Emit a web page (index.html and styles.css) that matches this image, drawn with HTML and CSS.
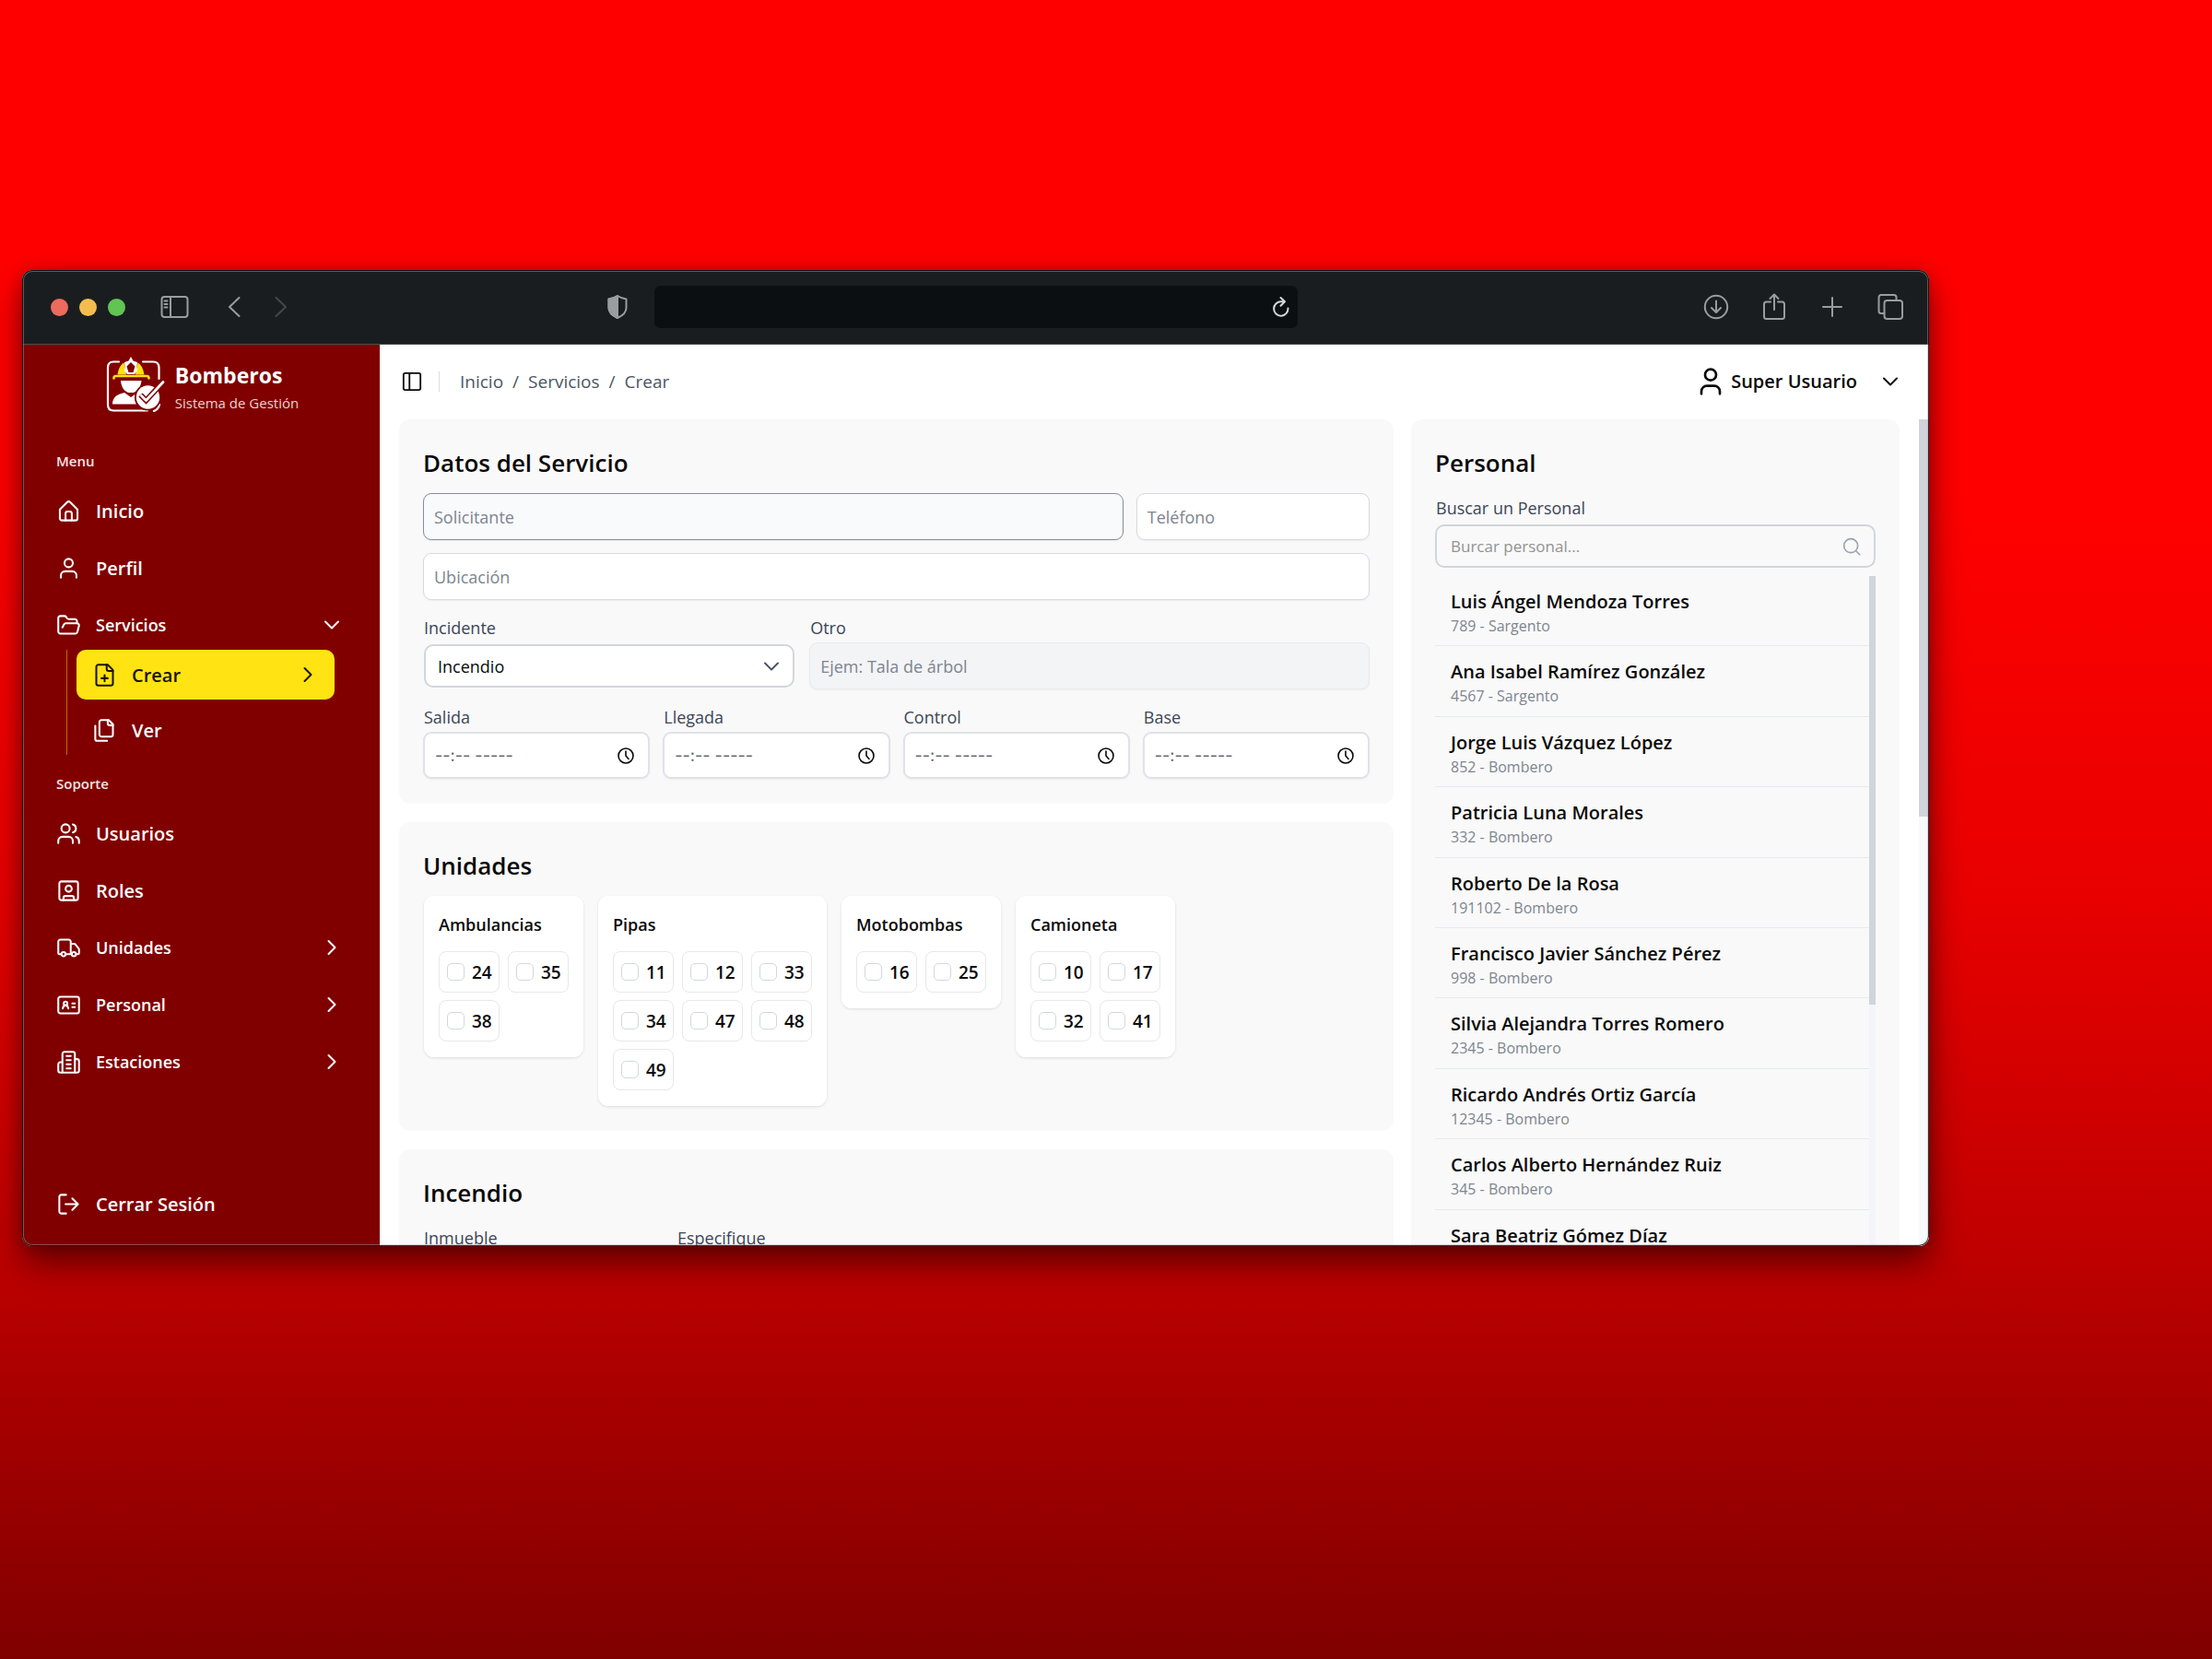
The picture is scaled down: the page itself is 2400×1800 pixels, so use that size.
FILE: index.html
```html
<!DOCTYPE html>
<html lang="es">
<head>
<meta charset="utf-8">
<meta name="viewport" content="width=device-width, initial-scale=1">
<title>Bomberos - Crear servicio</title>
<link rel="stylesheet" href="styles.css">
</head>
<body>
<div class="stage">
<div class="window">
  <div class="toolbar">
    <div class="toolbar-side">
      <span class="lights"><i class="light light-close"></i><i class="light light-min"></i><i class="light light-max"></i></span>
      <button class="tool tool-panel" type="button" aria-label="Barra lateral"><svg width="32" height="26" viewBox="0 0 32 26"><rect x="1.500" y="2" width="28" height="22" rx="3"/><path d="M11 2v22M4.500 6.500h3M4.500 10h3M4.500 13.500h3"/></svg></button>
      <button class="tool tool-back" type="button" aria-label="Atrás"><svg width="16" height="26" viewBox="0 0 16 26"><path d="M13.500 3 3 13l10.500 10"/></svg></button>
      <button class="tool tool-next" type="button" aria-label="Adelante"><svg width="16" height="26" viewBox="0 0 16 26"><path d="M2.500 3 13 13 2.500 23"/></svg></button>
      <button class="tool tool-shield" type="button" aria-label="Privacidad"><svg width="24" height="28" viewBox="0 0 24 28"><path d="M12 2c3 2 6 3 9.500 3.500V15c0 5-4 8.500-9.500 11C6.500 23.500 2.500 20 2.500 15V5.500C6 5 9 4 12 2z"/><path class="solid" d="M12 2v24C6.500 23.500 2.500 20 2.500 15V5.500C6 5 9 4 12 2z"/></svg></button>
    </div>
    <div class="address">
      <button class="tool reload" type="button" aria-label="Recargar"><svg width="20" height="24" viewBox="0 0 20 24"><path d="M17.500 13.500A7.700 7.700 0 1 1 10 6.300h3.500M9.500 2l4.500 4.300-4.500 4.500"/></svg></button>
    </div>
    <div class="toolbar-side toolbar-end">
      <button class="tool" type="button" aria-label="Descargas"><svg width="28" height="30" viewBox="0 0 28 30"><circle cx="14" cy="15" r="12.200"/><path d="M14 8.500v12M9 16l5 5 5-5"/></svg></button>
      <button class="tool" type="button" aria-label="Compartir"><svg width="28" height="30" viewBox="0 0 28 30"><path d="M10 9.500H5.500A2.500 2.500 0 0 0 3 12v13.500A2.500 2.500 0 0 0 5.500 28h17a2.500 2.500 0 0 0 2.500-2.500V12a2.500 2.500 0 0 0-2.500-2.500H18M14 18V1.500M9.500 6 14 1.500 18.500 6"/></svg></button>
      <button class="tool" type="button" aria-label="Nueva pestaña"><svg width="28" height="30" viewBox="0 0 28 30"><path d="M14 5v20M4 15h20"/></svg></button>
      <button class="tool" type="button" aria-label="Pestañas"><svg width="28" height="30" viewBox="0 0 28 30"><rect x="7.500" y="8" width="19.500" height="20" rx="3"/><path d="M7.500 22H4a2.500 2.500 0 0 1-2.500-2.500v-15A2.500 2.500 0 0 1 4 2h14a2.500 2.500 0 0 1 2.500 2.500V8"/></svg></button>
    </div>
  </div>

  <div class="app">
    <aside class="sidebar">
      <div class="brand">
        <svg class="logo" width="64" height="60" viewBox="0 0 64 60">
          <g fill="none" stroke="#fff" stroke-width="2.200" stroke-linecap="round">
            <path d="M14 5.500H8Q2 5.500 2 12v40q0 6.500 6 6.500h37"/>
            <path d="M40 5.500h11q6.500 0 6.500 6.500v12"/>
            <path d="M52 59q5-2 6-7"/>
          </g>
          <path fill="#fee20e" d="M12.500 19.500C13.500 13 16 8.500 19.500 6.500l2.500 13zM41.500 19.500C40.500 13 38 8.500 34.500 6.500l-2.500 13z"/>
          <path fill="none" stroke="#fee20e" stroke-width="2.600" stroke-linecap="round" stroke-linejoin="round" d="M8.500 23.500q0-2.500 2-2.500h34q2 0 2 2.500"/>
          <path fill="#fff" d="M27 0l2.500 4.500 4.500 1.500-.5 5 .5 4.500-3 3.500h-8l-3-3.500.5-4.500-.5-5 4.500-1.500z"/>
          <path fill="#800000" d="M27 6l4.500 4.500L29.500 17h-5l-2-6.500z"/>
          <path fill="#fff" d="M16 26h22.500c-.5 7-5 12-9 13h-5c-4-1-8-5.500-8.500-13z"/>
          <path fill="#fff" d="M7 51.500c0-8 6-11 13-12.500l7 5 5-3.500c-1 4-1 8 1 11z"/>
          <circle cx="45.500" cy="44" r="14.500" fill="#800000"/>
          <circle cx="45.500" cy="44" r="12.700" fill="#fff"/>
          <path fill="none" stroke="#800000" stroke-width="6" stroke-linecap="butt" stroke-linejoin="miter" d="M37.500 41.500l6 6L61 28.500"/>
          <path fill="none" stroke="#fff" stroke-width="2.800" stroke-linecap="round" d="M38.500 42.500l5 5L62 27.500"/>
        </svg>
        <div class="brand-text"><strong class="brand-name">Bomberos</strong><span class="brand-sub">Sistema de Gestión</span></div>
      </div>

      <nav class="nav">
        <h2 class="nav-label">Menu</h2>
        <a class="nav-item" href="#"><svg class="icon" viewBox="0 0 24 24"><path d="M3.500 10.500 10.400 3.600a2.300 2.300 0 0 1 3.200 0l6.900 6.900V19a2 2 0 0 1-2 2h-13a2 2 0 0 1-2-2z"/><path d="M9 21v-6.500a2 2 0 0 1 2-2h2a2 2 0 0 1 2 2V21"/></svg>Inicio</a>
        <a class="nav-item" href="#"><svg class="icon" viewBox="0 0 24 24"><path d="M19.500 21v-2a4 4 0 0 0-4-4h-7a4 4 0 0 0-4 4v2"/><circle cx="12" cy="7" r="4"/></svg>Perfil</a>
        <button class="nav-item nav-group" type="button"><svg class="icon" viewBox="0 0 24 24"><path d="m6 14 1.500-2.900A2 2 0 0 1 9.240 10H20a2 2 0 0 1 1.940 2.500l-1.540 6a2 2 0 0 1-1.950 1.500H4a2 2 0 0 1-2-2V5a2 2 0 0 1 2-2h3.900a2 2 0 0 1 1.690.9l.81 1.200a2 2 0 0 0 1.670.9H18a2 2 0 0 1 2 2v2"/></svg>Servicios<svg class="chevron" viewBox="0 0 24 24"><path d="m5 8.500 7 7 7-7"/></svg></button>
        <div class="subnav">
          <a class="subnav-item active" href="#"><svg class="icon" viewBox="0 0 24 24"><path d="M15 2H6a2 2 0 0 0-2 2v16a2 2 0 0 0 2 2h12a2 2 0 0 0 2-2V7z"/><path d="M14 2v4a2 2 0 0 0 2 2h4M9 15h6M12 12v6"/></svg>Crear<svg class="chevron" viewBox="0 0 24 24"><path d="m8.500 5 7 7-7 7"/></svg></a>
          <a class="subnav-item" href="#"><svg class="icon" viewBox="0 0 24 24"><path d="M20 7h-3a2 2 0 0 1-2-2V2"/><path d="M9 18a2 2 0 0 1-2-2V4a2 2 0 0 1 2-2h7l4 4v10a2 2 0 0 1-2 2z"/><path d="M3 7.600v12.800A1.600 1.600 0 0 0 4.600 22h9.800"/></svg>Ver</a>
        </div>
        <h2 class="nav-label nav-label-next">Soporte</h2>
        <a class="nav-item" href="#"><svg class="icon" viewBox="0 0 24 24"><path d="M16 21v-2a4 4 0 0 0-4-4H6a4 4 0 0 0-4 4v2"/><circle cx="9" cy="7" r="4"/><path d="M22 21v-2a4 4 0 0 0-3-3.870M16 3.130a4 4 0 0 1 0 7.750"/></svg>Usuarios</a>
        <a class="nav-item" href="#"><svg class="icon" viewBox="0 0 24 24"><rect x="3" y="3" width="18" height="18" rx="2"/><circle cx="12" cy="10" r="3"/><path d="M7 21v-2a2 2 0 0 1 2-2h6a2 2 0 0 1 2 2v2"/></svg>Roles</a>
        <button class="nav-item nav-group" type="button"><svg class="icon" viewBox="0 0 24 24"><path d="M14 18V6a2 2 0 0 0-2-2H4a2 2 0 0 0-2 2v11a1 1 0 0 0 1 1h2M15 18H9M19 18h2a1 1 0 0 0 1-1v-3.650a1 1 0 0 0-.22-.62l-3.480-4.350A1 1 0 0 0 17.520 8H14"/><circle cx="7" cy="18" r="2"/><circle cx="17" cy="18" r="2"/></svg>Unidades<svg class="chevron" viewBox="0 0 24 24"><path d="m8.500 5 7 7-7 7"/></svg></button>
        <button class="nav-item nav-group" type="button"><svg class="icon" viewBox="0 0 24 24"><rect x="2" y="4" width="20" height="16" rx="2"/><circle cx="9" cy="10.500" r="1.800"/><path d="M6.300 15.300c.3-1.900 1.300-3 2.700-3s2.400 1.100 2.700 3M15.500 10.500h2.500M15.500 14h2.500"/></svg>Personal<svg class="chevron" viewBox="0 0 24 24"><path d="m8.500 5 7 7-7 7"/></svg></button>
        <button class="nav-item nav-group" type="button"><svg class="icon" viewBox="0 0 24 24"><path d="M6 22V4a2 2 0 0 1 2-2h8a2 2 0 0 1 2 2v18zM6 12H4a2 2 0 0 0-2 2v6a2 2 0 0 0 2 2h2M18 9h2a2 2 0 0 1 2 2v9a2 2 0 0 1-2 2h-2M10 6h4M10 10h4M10 14h4M10 18h4"/></svg>Estaciones<svg class="chevron" viewBox="0 0 24 24"><path d="m8.500 5 7 7-7 7"/></svg></button>
      </nav>
      <button class="nav-item logout" type="button"><svg class="icon" viewBox="0 0 24 24"><path d="M9.500 21H5a2 2 0 0 1-2-2V5a2 2 0 0 1 2-2h4.500M9 12h12M15.500 6.500 21 12l-5.500 5.500"/></svg>Cerrar Sesión</button>
    </aside>

    <main class="main">
      <header class="header">
        <button class="plain" type="button" aria-label="Contraer menú"><svg class="icon-panel" viewBox="0 0 24 24"><rect x="2" y="2" width="20" height="20" rx="2"/><path d="M9 2v20"/></svg></button>
        <span class="divider"></span>
        <nav class="crumbs"><a href="#">Inicio</a><span>/</span><a href="#">Servicios</a><span>/</span><a href="#">Crear</a></nav>
        <button class="plain account" type="button"><svg class="icon-user" viewBox="0 0 24 24"><path d="M19.500 22v-2a4.500 4.500 0 0 0-4.500-4.500H9A4.500 4.500 0 0 0 4.500 20v2"/><circle cx="12" cy="6.500" r="4.500"/></svg>Super Usuario<svg class="icon-down" viewBox="0 0 24 24"><path d="m5 8.500 7 7 7-7"/></svg></button>
      </header>

      <div class="scroll-area">
        <div class="content">
          <div class="column">
            <section class="card">
              <h1 class="title">Datos del Servicio</h1>
              <div class="fields">
                <div class="row row-wide">
                  <input class="input input-hover" type="text" placeholder="Solicitante" aria-label="Solicitante">
                  <input class="input" type="tel" placeholder="Teléfono" aria-label="Teléfono">
                </div>
                <input class="input" type="text" placeholder="Ubicación" aria-label="Ubicación">
                <div class="row row-incident">
                  <div class="field"><label class="label" for="incidente">Incidente</label>
                    <div class="select-wrap"><select class="select" id="incidente"><option>Incendio</option></select><svg class="select-arrow" viewBox="0 0 24 24"><path d="m5 8.500 7 7 7-7"/></svg></div>
                  </div>
                  <div class="field"><label class="label" for="otro">Otro</label><input class="input" id="otro" type="text" placeholder="Ejem: Tala de árbol" disabled></div>
                </div>
                <div class="row row-times">
                  <div class="field"><label class="label" for="salida">Salida</label><div class="time"><input class="input input-time" id="salida" type="text" placeholder="--:-- -----"><svg class="clock" viewBox="0 0 20 20"><circle cx="10" cy="10" r="8"/><path d="M10 5v5l3 3.500"/></svg></div></div>
                  <div class="field"><label class="label" for="llegada">Llegada</label><div class="time"><input class="input input-time" id="llegada" type="text" placeholder="--:-- -----"><svg class="clock" viewBox="0 0 20 20"><circle cx="10" cy="10" r="8"/><path d="M10 5v5l3 3.500"/></svg></div></div>
                  <div class="field"><label class="label" for="control">Control</label><div class="time"><input class="input input-time" id="control" type="text" placeholder="--:-- -----"><svg class="clock" viewBox="0 0 20 20"><circle cx="10" cy="10" r="8"/><path d="M10 5v5l3 3.500"/></svg></div></div>
                  <div class="field"><label class="label" for="base">Base</label><div class="time"><input class="input input-time" id="base" type="text" placeholder="--:-- -----"><svg class="clock" viewBox="0 0 20 20"><circle cx="10" cy="10" r="8"/><path d="M10 5v5l3 3.500"/></svg></div></div>
                </div>
              </div>
            </section>

            <section class="card">
              <h2 class="title">Unidades</h2>
              <div class="units">
                <fieldset class="unit"><h3 class="unit-name">Ambulancias</h3>
                  <div class="chips">
                    <label class="chip"><input class="check" type="checkbox">24</label>
                    <label class="chip"><input class="check" type="checkbox">35</label>
                    <label class="chip"><input class="check" type="checkbox">38</label>
                  </div>
                </fieldset>
                <fieldset class="unit"><h3 class="unit-name">Pipas</h3>
                  <div class="chips chips-three">
                    <label class="chip"><input class="check" type="checkbox">11</label>
                    <label class="chip"><input class="check" type="checkbox">12</label>
                    <label class="chip"><input class="check" type="checkbox">33</label>
                    <label class="chip"><input class="check" type="checkbox">34</label>
                    <label class="chip"><input class="check" type="checkbox">47</label>
                    <label class="chip"><input class="check" type="checkbox">48</label>
                    <label class="chip"><input class="check" type="checkbox">49</label>
                  </div>
                </fieldset>
                <fieldset class="unit"><h3 class="unit-name">Motobombas</h3>
                  <div class="chips">
                    <label class="chip"><input class="check" type="checkbox">16</label>
                    <label class="chip"><input class="check" type="checkbox">25</label>
                  </div>
                </fieldset>
                <fieldset class="unit"><h3 class="unit-name">Camioneta</h3>
                  <div class="chips">
                    <label class="chip"><input class="check" type="checkbox">10</label>
                    <label class="chip"><input class="check" type="checkbox">17</label>
                    <label class="chip"><input class="check" type="checkbox">32</label>
                    <label class="chip"><input class="check" type="checkbox">41</label>
                  </div>
                </fieldset>
              </div>
            </section>

            <section class="card">
              <h2 class="title">Incendio</h2>
              <div class="row row-fire">
                <div class="field"><label class="label" for="inmueble">Inmueble</label><input class="input" id="inmueble" type="text"></div>
                <div class="field"><label class="label" for="especifique">Especifique</label><input class="input" id="especifique" type="text"></div>
              </div>
            </section>
          </div>

          <section class="card people">
            <h2 class="title">Personal</h2>
            <label class="label people-label" for="buscar">Buscar un Personal</label>
            <div class="search"><input class="search-input" id="buscar" type="search" placeholder="Burcar personal..."><svg class="search-icon" viewBox="0 0 24 24"><circle cx="11" cy="11" r="9"/><path d="m18 18 4.500 4.500"/></svg></div>
            <div class="people-box">
              <ul class="people-list">
                <li class="person"><span class="person-name">Luis Ángel Mendoza Torres</span><span class="person-role">789 - Sargento</span></li>
                <li class="person"><span class="person-name">Ana Isabel Ramírez González</span><span class="person-role">4567 - Sargento</span></li>
                <li class="person"><span class="person-name">Jorge Luis Vázquez López</span><span class="person-role">852 - Bombero</span></li>
                <li class="person"><span class="person-name">Patricia Luna Morales</span><span class="person-role">332 - Bombero</span></li>
                <li class="person"><span class="person-name">Roberto De la Rosa</span><span class="person-role">191102 - Bombero</span></li>
                <li class="person"><span class="person-name">Francisco Javier Sánchez Pérez</span><span class="person-role">998 - Bombero</span></li>
                <li class="person"><span class="person-name">Silvia Alejandra Torres Romero</span><span class="person-role">2345 - Bombero</span></li>
                <li class="person"><span class="person-name">Ricardo Andrés Ortiz García</span><span class="person-role">12345 - Bombero</span></li>
                <li class="person"><span class="person-name">Carlos Alberto Hernández Ruiz</span><span class="person-role">345 - Bombero</span></li>
                <li class="person"><span class="person-name">Sara Beatriz Gómez Díaz</span></li>
              </ul>
              <div class="track track-list"><div class="thumb thumb-list"></div></div>
            </div>
          </section>
        </div>
        <div class="track"><div class="thumb thumb-page"></div></div>
      </div>
    </main>
  </div>
</div>
</div>
</body>
</html>
```
FILE: styles.css
```css
* {
  box-sizing: border-box;
}

body {
  margin: 0;
  font-family: "Open Sans", "Noto Sans", sans-serif;
  font-size: 18px;
  color: #0a0a0a;
}

button,
input,
select {
  font: inherit;
  color: inherit;
}

h1, h2, h3, ul {
  margin: 0;
  padding: 0;
}

a {
  color: inherit;
  text-decoration: none;
}

svg {
  display: block;
  flex: none;
  fill: none;
  stroke: currentColor;
  stroke-linecap: round;
  stroke-linejoin: round;
}

.stage {
  height: 100vh;
  padding: 293px 307px 448px 24px;
  background: linear-gradient(180deg, #ff0000 0%, #ff0000 30%, #e80000 54%, #c00000 75%, #800000 100%);
}

/* Browser window */
.window {
  position: relative;
  display: flex;
  flex-direction: column;
  height: 100%;
  border-radius: 11px;
  background: #fff;
  box-shadow: 0 18px 36px rgba(0, 0, 0, 0.5), 0 0 16px rgba(0, 0, 0, 0.2);
  overflow: hidden;
}

.window::after {
  content: "";
  position: absolute;
  inset: 0;
  border-radius: 11px;
  box-shadow: inset 0 0 0 1px rgba(0, 0, 0, 0.8), inset 0 0 0 2px rgba(160, 170, 170, 0.45);
  pointer-events: none;
}

.toolbar {
  display: grid;
  grid-template-columns: minmax(0, 1fr) 698px minmax(0, 1fr);
  align-items: center;
  flex: none;
  height: 81px;
  border-bottom: 1px solid #4a4d4f;
  background: #1a1d1f;
  color: #9a9d9f;
}

.toolbar-side {
  display: flex;
  align-items: center;
  padding: 0 28px 0 31px;
}

.toolbar-end {
  justify-content: flex-end;
  gap: 35px;
}

.lights {
  display: flex;
  gap: 12px;
}

.light {
  width: 19px;
  height: 19px;
  border-radius: 50%;
}

.light-close { background: #ed6a5e; }
.light-min { background: #f4bd4f; }
.light-max { background: #61c554; }

.tool {
  padding: 0;
  border: 0;
  background: none;
}

.tool svg { stroke-width: 2; }

.tool-panel { margin-left: 38px; }
.tool-back { margin-left: 40px; }
.tool-next { margin-left: 35px; color: #45484a; }
.tool-shield { margin-left: auto; }

.solid { fill: currentColor; }

.address {
  display: flex;
  align-items: center;
  justify-content: flex-end;
  height: 46px;
  padding-right: 8px;
  border-radius: 7px;
  background: #0b0f11;
}

.reload { color: #d5d7d8; }

/* Application */
.app {
  display: flex;
  flex: 1;
  min-height: 0;
}

.sidebar {
  display: flex;
  flex-direction: column;
  flex: none;
  width: 388px;
  padding: 13px 30px 19px 37px;
  background: #800000;
  color: #fff;
}

.brand {
  display: flex;
  justify-content: center;
  gap: 11px;
  padding-right: 4px;
}

.logo { stroke: none; }

.brand-text {
  display: flex;
  flex-direction: column;
  padding-top: 5px;
}

.brand-name {
  font-size: 23px;
  line-height: 30px;
}

.brand-sub {
  font-size: 15px;
  line-height: 30px;
  color: #e8d2d2;
}

.nav { margin-top: 33px; }

.nav-label {
  margin-bottom: 12px;
  font-size: 15px;
  font-weight: 600;
  line-height: 30px;
  color: #f3e4e4;
}

.nav-label-next { margin-top: 16px; }

.nav-item {
  display: flex;
  align-items: center;
  gap: 16px;
  width: 100%;
  height: 54px;
  padding: 0 10px 0 0;
  border: 0;
  background: none;
  font-size: 20px;
  font-weight: 600;
  text-align: left;
}

.nav-item + .nav-item { margin-top: 8px; }

.nav-group { font-size: 18px; }

.icon {
  width: 27px;
  height: 27px;
  stroke-width: 1.8;
}

.chevron {
  width: 24px;
  height: 24px;
  margin-left: auto;
  stroke-width: 2;
}

.subnav {
  display: flex;
  flex-direction: column;
  gap: 6px;
  margin-left: 11px;
  padding-left: 10px;
  border-left: 1px solid #b56a08;
}

.subnav-item {
  display: flex;
  align-items: center;
  gap: 16px;
  height: 54px;
  margin-right: 19px;
  padding: 0 17px 0 17px;
  border-radius: 10px;
  font-size: 20px;
  font-weight: 600;
}

.active {
  background: #ffe312;
  color: #1a1400;
}

.logout { margin-top: auto; }

.main {
  display: flex;
  flex-direction: column;
  flex: 1;
  min-width: 0;
}

.header {
  display: flex;
  align-items: center;
  flex: none;
  height: 81px;
  padding: 0 30px 2px 24px;
}

.plain {
  display: flex;
  align-items: center;
  padding: 0;
  border: 0;
  background: none;
}

.icon-panel {
  width: 22px;
  height: 22px;
  stroke-width: 2;
}

.divider {
  width: 1px;
  height: 22px;
  margin: 0 22px 0 18px;
  background: #d8dce2;
}

.crumbs {
  display: flex;
  gap: 10px;
  font-size: 19px;
  font-weight: 500;
  color: #4b5563;
}

.account {
  margin-left: auto;
  font-size: 20px;
  font-weight: 600;
}

.icon-user {
  width: 32px;
  height: 32px;
  margin-right: 6px;
  stroke-width: 2;
}

.icon-down {
  width: 24px;
  height: 24px;
  margin-left: 24px;
  stroke-width: 2;
}

.scroll-area {
  display: flex;
  flex: 1;
  min-height: 0;
}

.content {
  display: grid;
  grid-template-columns: minmax(0, 1fr) 530px;
  gap: 19px;
  flex: 1;
  min-width: 0;
  height: 100%;
  padding: 0 21px;
}

.column {
  display: flex;
  flex-direction: column;
  gap: 20px;
  min-height: 0;
}

.card {
  flex: none;
  padding: 26px 26px 27px;
  border-radius: 12px;
  background: #f9f9f9;
}

.title {
  margin-bottom: 12px;
  font-size: 26px;
  font-weight: 600;
  line-height: 42px;
}

.fields {
  display: flex;
  flex-direction: column;
  gap: 14px;
}

.row {
  display: grid;
  gap: 14px;
}

.row-wide { grid-template-columns: 3fr 1fr; }
.row-incident { grid-template-columns: 2fr 3fr; }
.row-times { grid-template-columns: repeat(4, 1fr); }
.row-fire { grid-template-columns: repeat(2, 261px); }

.label {
  display: block;
  padding-left: 1px;
  font-weight: 500;
  line-height: 32px;
  color: #3c4556;
}

.input {
  display: block;
  width: 100%;
  height: 51px;
  padding: 0 11px;
  border: 1px solid #d7dae0;
  border-radius: 9px;
  background: #fff;
  box-shadow: 0 1px 2px rgba(0, 0, 0, 0.05);
}

.input::placeholder {
  color: #7d8490;
  opacity: 1;
}

.input-hover {
  border-color: #858c9b;
  background: #f9fafc;
}

.input:disabled {
  border-color: #e8eaed;
  background: #f3f4f6;
}

.select-wrap,
.time,
.search {
  display: grid;
  align-items: center;
}

.select-wrap > *,
.time > *,
.search > * {
  grid-area: 1 / 1;
}

.select-wrap { padding: 2px 2px 0 1px; }

.select {
  width: 100%;
  height: 47px;
  padding: 0 13px;
  border: 2px solid #d2d6dc;
  border-radius: 10px;
  background: #fff;
  appearance: none;
}

.select-arrow {
  width: 24px;
  height: 24px;
  justify-self: end;
  margin-right: 13px;
  stroke: #4b5563;
  stroke-width: 2;
}

.input-time {
  border-width: 2px;
  border-color: #dfe2e8;
  font-family: Inter, "Open Sans", sans-serif;
}

.input-time::placeholder { color: #5c626c; }

.clock {
  width: 20px;
  height: 20px;
  justify-self: end;
  margin-right: 16px;
  stroke-width: 1.6;
}

.units {
  display: flex;
  align-items: flex-start;
  gap: 16px;
  padding-left: 1px;
}

.unit {
  min-width: 0;
  margin: 0;
  padding: 16px 16px 17px;
  border: 0;
  border-radius: 11px;
  background: #fff;
  box-shadow: 0 1px 3px rgba(0, 0, 0, 0.12);
}

.unit-name {
  margin-bottom: 14px;
  font-size: 18px;
  font-weight: 600;
  line-height: 30px;
}

.chips {
  display: grid;
  grid-template-columns: repeat(2, 66px);
  gap: 8px 9px;
}

.chips-three { grid-template-columns: repeat(3, 66px); }

.chip {
  display: flex;
  align-items: center;
  gap: 8px;
  height: 45px;
  padding-left: 8px;
  border: 1px solid #e6e8eb;
  border-radius: 8px;
  font-size: 19px;
  font-weight: 600;
}

.check {
  width: 19px;
  height: 19px;
  margin: 0;
  border: 1px solid #d3d7de;
  border-radius: 5px;
  background: #fff;
  appearance: none;
}

/* Staff panel */
.people {
  display: flex;
  flex-direction: column;
  min-height: 0;
  padding-bottom: 0;
  border-radius: 12px 12px 0 0;
}

.people-label { margin-bottom: 2px; }

.search-input {
  width: 100%;
  height: 47px;
  padding: 0 15px;
  border: 2px solid #d1d5dc;
  border-radius: 10px;
  background: transparent;
  font-size: 17px;
  appearance: none;
}

.search-input::placeholder {
  color: #929292;
  opacity: 1;
}

.search-icon {
  width: 20px;
  height: 20px;
  justify-self: end;
  margin-right: 16px;
  stroke: #9aa2b1;
  stroke-width: 2;
}

.people-box {
  display: flex;
  flex: 1;
  min-height: 0;
  margin-top: 9px;
  overflow: hidden;
}

.people-list {
  flex: 1;
  list-style: none;
}

.person {
  display: flex;
  flex-direction: column;
  padding: 13px 17px 10px;
  border-bottom: 1px solid #e6eaf0;
}

.person-name {
  font-size: 20px;
  font-weight: 600;
  line-height: 1.5;
}

.person-role {
  font-size: 16px;
  line-height: 1.4;
  color: #7e858f;
}

.track {
  flex: none;
  width: 11px;
  background: #f8f9fb;
}

.track-list {
  width: 7px;
  background: #f4f5f9;
}

.thumb { background: #d0d4db; }

.thumb-page { height: 48%; }

.thumb-list { height: 64%; }
```
